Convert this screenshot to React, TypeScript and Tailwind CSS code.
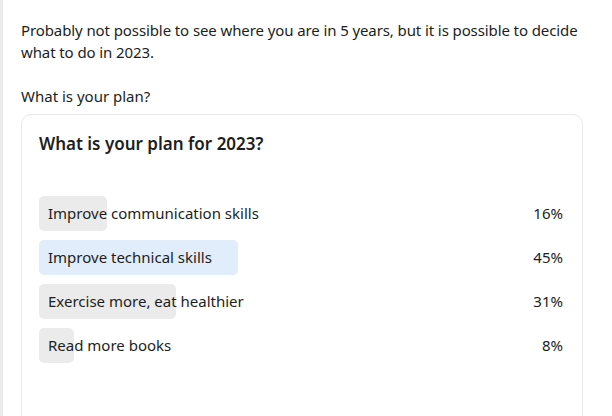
export default function App() {
  const options = [
    { label: 'Improve communication skills', pct: '16%', width: 68, active: false },
    { label: 'Improve technical skills', pct: '45%', width: 199, active: true },
    { label: 'Exercise more, eat healthier', pct: '31%', width: 137, active: false },
    { label: 'Read more books', pct: '8%', width: 35, active: false },
  ]

  return (
    <div
      className="w-[612px] h-[416px] overflow-hidden bg-white flex text-[#1c1e21]"
      style={{ fontFamily: '"Noto Sans", "Open Sans", sans-serif' }}
    >
      <div className="w-[3px] shrink-0 bg-[#ebebeb]" />
      <div className="flex-1 pl-[18px] pt-[19px]">
        <p className="w-[572px] text-[15px] leading-[22px] tracking-[-0.1px]">
          Probably not possible to see where you are in 5 years, but it is possible to decide what to do in 2023.
        </p>
        <p className="text-[15px] leading-[22px] mt-[22px]">What is your plan?</p>

        <div className="mt-[7px] mr-[29px] border border-[#e8e8e8] rounded-[10px] h-[320px] pl-[17px] pr-[19px] pt-[17px]">
          <h2 className="text-[17px] leading-[24px] font-semibold">What is your plan for 2023?</h2>

          <div className="mt-[40px] flex flex-col gap-[9px]">
            {options.map((o) => (
              <div key={o.label} className="relative h-[35px] flex items-center justify-between">
                <div
                  className={`absolute left-0 top-0 h-full rounded-[5px] ${o.active ? 'bg-[#e1edfb]' : 'bg-[#ebebeb]'}`}
                  style={{ width: o.width }}
                />
                <span className="relative pl-[9px] text-[15px]">{o.label}</span>
                <span className="relative text-[15px]">{o.pct}</span>
              </div>
            ))}
          </div>
        </div>
      </div>
    </div>
  )
}
